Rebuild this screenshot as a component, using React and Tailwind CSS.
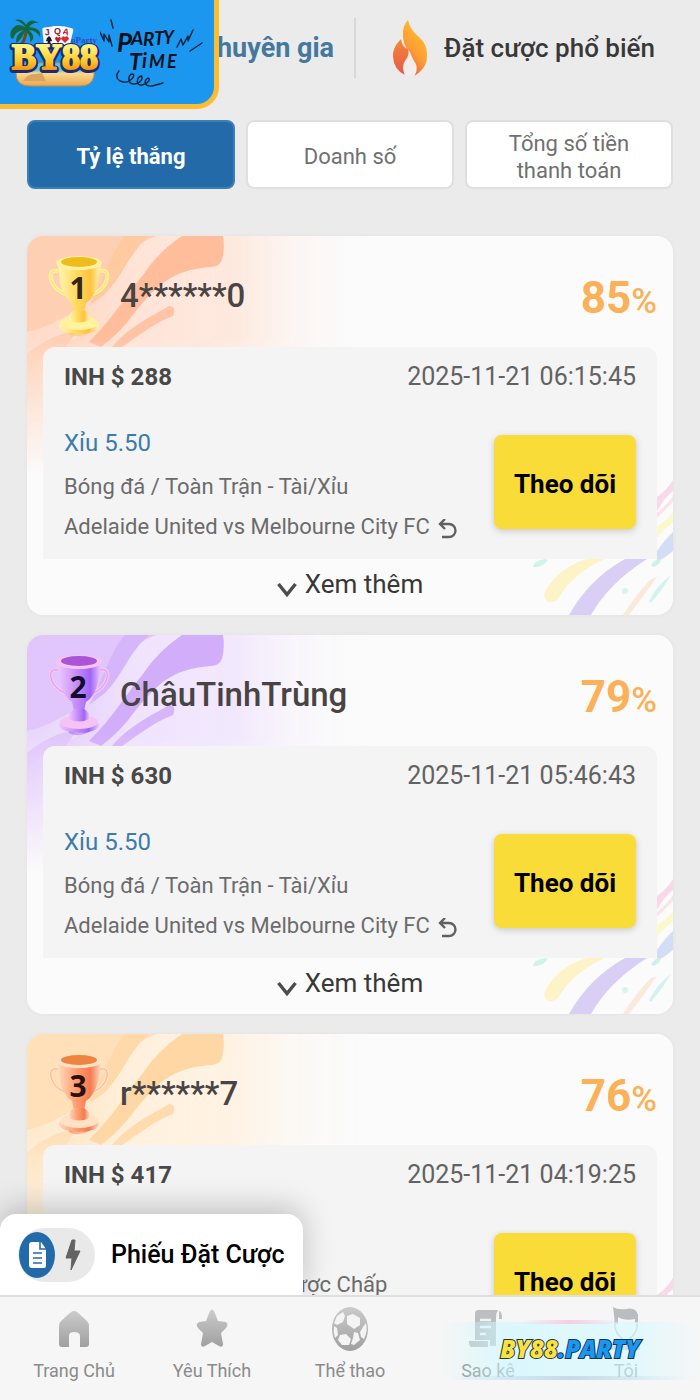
import React from "react";

const bets = [
  { rank: 1, name: "4******0", rate: 85, stake: 288, time: "2025-11-21 06:15:45", type: "Tài/Xỉu" },
  { rank: 2, name: "ChâuTinhTrùng", rate: 79, stake: 630, time: "2025-11-21 05:46:43", type: "Tài/Xỉu" },
  { rank: 3, name: "r******7", rate: 76, stake: 417, time: "2025-11-21 04:19:25", type: "Cược Chấp" },
];

const themes = {
  1: { bg: "#ffcfb4", deep: "#ffbd9c", mid: "#ffcaa0", pale: "#ffe3d6", cup: ["#fff6b0", "#ffd95c", "#ffc23e"], rim: "#fff3a0", inner: "#eebc1c", digit: "#33241c" },
  2: { bg: "#e0c6fb", deep: "#d2adf9", mid: "#d6b6fa", pale: "#efe2fd", cup: ["#efc6ff", "#c48af8", "#a065f4"], rim: "#f5c4f5", inner: "#a955d6", digit: "#120c30" },
  3: { bg: "#ffe0b8", deep: "#ffd7a4", mid: "#ffd9aa", pale: "#fff0dc", cup: ["#ffd9bd", "#ff9a6c", "#f67a50"], rim: "#ffe1c6", inner: "#ef8440", digit: "#2a1010" },
};

function Ribbon({ rank }) {
  const t = themes[rank];
  return (
    <svg className="absolute left-0 top-0 h-[250px] w-[340px]" viewBox="0 0 340 250" aria-hidden="true">
      <defs>
        <linearGradient id={`wash${rank}`} x1="0" x2="1" y1="0" y2="0">
          <stop offset="0" stopColor={t.bg} />
          <stop offset=".3" stopColor={t.pale} />
          <stop offset=".62" stopColor={t.pale} stopOpacity=".75" />
          <stop offset="1" stopColor="#fbfbfb" stopOpacity="0" />
        </linearGradient>
        <linearGradient id={`fade${rank}`} x1="0" x2="0" y1="0" y2="1">
          <stop offset=".4" stopColor="#fff" />
          <stop offset=".95" stopColor="#000" />
        </linearGradient>
        <mask id={`mask${rank}`}>
          <rect width="340" height="250" fill={`url(#fade${rank})`} />
        </mask>
      </defs>
      <g mask={`url(#mask${rank})`}>
        <rect width="340" height="250" fill={`url(#wash${rank})`} />
        <path d="M0 0H130C98 8 88 50 52 72C26 86 20 98 0 104Z" fill={t.bg} />
        <path d="M98 0H122C102 17 96 40 78 58L62 70C76 46 82 18 98 0Z" fill={t.mid} />
        <path d="M155 0H196Q198 12 195 24Q192 31 184 31C143 34 130 50 108 76Q94 96 74 111L62 106C88 80 96 63 116 39Q130 17 155 0Z" fill={t.deep} />
        <path d="M0 96C26 90 28 83 51 76L68 90C47 106 26 112 0 128Z" fill={t.pale} opacity=".6" />
        <path d="M0 118Q24 98 50 95L38 112Q14 116 0 136Z" fill={t.bg} />
        <path d="M84 112C102 91 120 83 142 70Q150 70 146 80C130 86 116 96 94 112Z" fill={t.deep} opacity=".85" />
      </g>
    </svg>
  );
}

function Confetti() {
  return (
    <svg className="absolute bottom-0 right-0 h-[150px] w-[160px]" viewBox="0 0 160 150" aria-hidden="true">
      <path d="M144 32Q154 25 160 15V26Q151 33 144 46Z" fill="#f7d9e8" />
      <path d="M144 48Q154 40 160 31V37Q152 45 144 53Z" fill="#fbe3ea" />
      <path d="M144 61Q154 56 160 47V57Q152 64 144 72Z" fill="#fbf8cc" />
      <path d="M144 86Q152 74 160 67V86Q153 92 144 97Z" fill="#d3ddf6" />
      <path d="M36 137Q28 133 34 123Q50 100 74 94H92Q60 108 45 134Q41 138 36 137Z" fill="#fcf4c6" />
      <path d="M56 150Q76 114 112 94H134Q96 118 78 150Z" fill="#d9cff5" />
      <path d="M110 150Q124 128 138 114L144 112Q130 132 116 150Z" fill="#fbeadb" />
      <path d="M136 136Q144 120 158 110Q150 124 138 138Z" fill="#d4f3f0" />
      <path d="M20 102Q20 96 32 94L35 95Q30 102 23 102Z" fill="#cff5e7" />
      <path d="M138 100Q143 93 148 94Q147 100 140 102Z" fill="#cdf0ea" />
      <circle cx="112" cy="126" r="3" fill="#d9f4ed" />
    </svg>
  );
}

function Trophy({ rank }) {
  const t = themes[rank];
  return (
    <svg className="h-[84px] w-[62px]" viewBox="0 0 62 84" role="img" aria-label={`Hạng ${rank}`}>
      <defs>
        <linearGradient id={`cup${rank}`} x1="0" x2="1" y1="0" y2="0">
          <stop offset="0" stopColor={t.cup[0]} />
          <stop offset=".45" stopColor={t.cup[1]} />
          <stop offset=".75" stopColor={t.cup[2]} />
          <stop offset="1" stopColor={t.cup[0]} />
        </linearGradient>
      </defs>
      <path d="M10 17Q1 15 3 25Q6 36 17 40M52 17Q61 15 59 25Q56 36 45 40" fill="none" stroke={t.rim} strokeWidth="4" />
      <path d="M10 17Q1 15 3 25Q6 36 17 40M52 17Q61 15 59 25Q56 36 45 40" fill="none" stroke={t.cup[1]} strokeWidth="1" opacity=".7" />
      <path d="M10 9L12 29Q15 43 24 49L26 58H36L38 49Q47 43 50 29L53 9Z" fill={`url(#cup${rank})`} />
      <ellipse cx="31" cy="72" rx="20" ry="8" fill={`url(#cup${rank})`} />
      <ellipse cx="31" cy="69" rx="19" ry="7" fill={t.rim} />
      <path d="M21 66Q20 60 26 56H36Q43 60 41 66Q31 71 21 66Z" fill={`url(#cup${rank})`} />
      <path d="M21 79Q31 84 41 78" stroke={t.cup[2]} strokeWidth="2" fill="none" opacity=".5" />
      <ellipse cx="31" cy="9" rx="23" ry="7" fill={t.rim} />
      <ellipse cx="31" cy="8" rx="18" ry="5" fill={t.inner} />
      <text x="30" y="45" textAnchor="middle" fontFamily="'Noto Sans', sans-serif" fontWeight="700" fontSize="30" fill={t.digit}>{rank}</text>
    </svg>
  );
}

function BetCard({ bet }) {
  return (
    <article className="relative flex shrink-0 flex-col overflow-hidden rounded-2xl bg-[#fbfbfb] shadow-[0_0_5px_rgba(0,0,0,0.04)]">
      <Ribbon rank={bet.rank} />
      <Confetti />
      <header className="relative flex h-[111px] items-center gap-2.5 pl-[21px] pr-4 pt-2">
        <Trophy rank={bet.rank} />
        <h2 className="flex-1 text-[33px] font-medium text-[#484444]">{bet.name}</h2>
        <p className="pt-1 text-[44px] font-bold text-[#fbb157]">
          {bet.rate}<span className="text-[35px] font-medium">%</span>
        </p>
      </header>
      <div className="relative mx-4 rounded-t-xl bg-[#f4f4f4] px-[21px] pb-3">
        <div className="flex h-[60px] items-center justify-between">
          <strong className="text-[24px] font-bold text-[#484848]">INH $ {bet.stake}</strong>
          <time className="text-[25px] text-[#626262]">{bet.time}</time>
        </div>
        <div className="flex items-start justify-between pt-4">
          <div className="whitespace-nowrap text-[22px] leading-10 text-[#6b6b6b]">
            <p className="mb-1 text-[24px] text-[#3c7cac]">Xỉu 5.50</p>
            <p>Bóng đá / Toàn Trận - {bet.type}</p>
            <p className="flex items-center gap-2">
              Adelaide United vs Melbourne City FC
              <svg className="mt-1 h-5 w-5" viewBox="0 0 20 20" fill="none" stroke="#606060" strokeWidth="2.4" aria-hidden="true">
                <path d="M2 5H11A6.500 6.500 0 0 1 11 18H4M7 0L2 5L7 10" />
              </svg>
            </p>
          </div>
          <button className="mt-3 h-[94px] w-[142px] shrink-0 rounded-lg bg-[#f9dc37] pt-1 text-[26px] font-bold text-black shadow-[0_2px_7px_rgba(0,0,0,0.18)]">
            Theo dõi
          </button>
        </div>
      </div>
      <button className="relative flex h-14 items-center justify-center gap-2 pb-1.5 text-[26px] text-[#383838]">
        <svg className="mt-3 h-[18px] w-5" viewBox="0 0 20 18" fill="none" stroke="#4c4c4c" strokeWidth="3.4" aria-hidden="true">
          <path d="M1.500 3L10 13.500L18.500 3" />
        </svg>
        Xem thêm
      </button>
    </article>
  );
}

function BrandLogo() {
  return (
    <svg className="h-[72px] w-[92px] shrink-0" viewBox="0 0 92 72" role="img" aria-label="BY88">
      <defs>
        <linearGradient id="gold" x1="0" x2="0" y1="0" y2="1">
          <stop offset=".25" stopColor="#fff27a" />
          <stop offset=".6" stopColor="#ffc928" />
          <stop offset=".85" stopColor="#f58d10" />
        </linearGradient>
        <linearGradient id="sand" x1="0" x2="0" y1="0" y2="1">
          <stop offset="0" stopColor="#59c8e5" />
          <stop offset=".3" stopColor="#59c8c9" />
          <stop offset=".45" stopColor="#f9d98f" />
          <stop offset="1" stopColor="#e9a752" />
        </linearGradient>
      </defs>
      <path d="M8 46H86V59Q84 69 72 69H22Q8 69 8 56Z" fill="url(#sand)" stroke="#c98b42" strokeWidth="1" />
      <path d="M15 64Q20 56 28 57L34 56L38 64Z" fill="#dba35e" />
      <path d="M14 27Q19 18 18 10" fill="none" stroke="#6b4a20" strokeWidth="3" />
      <path d="M18 11Q9 4 3 14Q1 21 5 22Q7 14 16 13Q7 18 8 26Q14 22 17 14Q23 18 22 25Q29 21 21 13Q28 13 32 20Q34 11 21 10Q25 5 31 6Q22 0 18 8Q14 1 7 3Q14 5 18 11Z" fill="#14663c" />
      <g fontFamily="'Liberation Sans', sans-serif" fontWeight="700" fontSize="9">
        <g transform="rotate(-6 41 19)"><rect x="35" y="10" width="13" height="18" rx="2" fill="#f2f5ff" /><text x="37" y="18" fill="#8f1624">J</text></g>
        <g transform="rotate(14 58 18)"><rect x="52" y="10" width="12" height="18" rx="2" fill="#f9faff" /><text x="54" y="18" fill="#c21c28">A</text></g>
        <rect x="44" y="9" width="11" height="19" rx="2" fill="#fff" /><text x="46" y="17" fill="#8f1624">Q</text>
      </g>
      <path d="M38 24Q38 21 41 19Q44 21 44 24L42 24.500L43 27H39L40 24.500Z" fill="#161a20" />
      <path d="M50 26L47 22Q48 18 50 21Q52 18 53 22Z" fill="#c21c28" />
      <path d="M57 26L53 22Q54 18 57 20Q60 18 61 22Z" fill="#d33036" />
      <text x="63" y="26" fontFamily="'Liberation Serif', serif" fontWeight="700" fontSize="9" fill="#344ac6">oParty</text>
      <text x="4" y="53" fontFamily="'Liberation Serif', serif" fontWeight="700" fontSize="36" fill="none" stroke="#1a2a78" strokeWidth="6" strokeLinejoin="round">BY88</text>
      <text x="4" y="52" fontFamily="'Liberation Serif', serif" fontWeight="700" fontSize="36" fill="url(#gold)" stroke="url(#gold)" strokeWidth="2" strokeLinejoin="round">BY88</text>
    </svg>
  );
}

function PartyTime() {
  return (
    <svg className="h-[72px] w-[104px] shrink-0" viewBox="0 0 104 72" role="img" aria-label="Party Time">
      <g fontFamily="Lato, sans-serif" fontWeight="700" fontStyle="italic" fill="#08111c">
        <text x="17" y="35" fontSize="26">P</text>
        <text x="31" y="28" fontSize="19">A</text>
        <text x="43" y="29" fontSize="19">R</text>
        <text x="54" y="28" fontSize="18">T</text>
        <text x="63" y="27" fontSize="18">Y</text>
        <text x="29" y="53" fontSize="23">T</text>
        <text x="42" y="51" fontSize="20">i</text>
        <text x="49" y="51" fontSize="18">M</text>
        <text x="67" y="51" fontSize="18">E</text>
      </g>
      <g fill="none" stroke="#08203a" strokeWidth="1.400" strokeLinecap="round" strokeLinejoin="round">
        <path d="M0 15L4 24V17L9 25V18L12 29M11 3L13 11" />
        <path d="M77 30L81 22L83 28L88 19V24L93 13M90 34Q96 30 102 26" />
        <path d="M19 54Q14 60 20 64C29 68 36 59 33 57C28 57 27 66 33 67C41 67 44 60 41 59C36 61 36 69 42 68C48 67 51 62 48 61C43 64 45 70 52 69L63 66" />
      </g>
    </svg>
  );
}

function Flame() {
  return (
    <svg className="h-[58px] w-9 shrink-0" viewBox="0 0 36 58" aria-hidden="true">
      <defs>
        <linearGradient id="outer" x1=".7" x2=".2" y1="0" y2="1">
          <stop offset="0" stopColor="#ffc52e" /><stop offset=".55" stopColor="#fc9c35" /><stop offset="1" stopColor="#e9563f" />
        </linearGradient>
        <linearGradient id="side" x1="0" x2="0" y1="0" y2="1">
          <stop offset="0" stopColor="#f08a36" /><stop offset="1" stopColor="#e9574a" />
        </linearGradient>
      </defs>
      <path d="M16 1Q10 7 11 18Q12 28 18 33Q21 41 24 45Q26 52 22 57Q36 49 35 35Q35 25 27 18Q18 11 16 1Z" fill="url(#outer)" />
      <path d="M9 20Q0 29 1 38Q2 51 13 56Q9 48 13 42Q18 36 16 30Q10 28 9 20Z" fill="url(#side)" />
      <path d="M18 36Q17 41 13 46Q11 51 13 57H22Q25 53 24 46L21 47Q19 42 18 36Z" fill="#f3eceb" />
    </svg>
  );
}

function NavIcon({ name }) {
  const fill = "url(#navGray)";
  return (
    <svg className="h-11 w-10" viewBox="0 0 40 44" aria-hidden="true">
      <defs>
        <linearGradient id="navGray" x1="0" x2="0" y1="0" y2="1">
          <stop offset="0" stopColor="#cbcbcb" /><stop offset="1" stopColor="#a0a0a0" />
        </linearGradient>
      </defs>
      {name === "home" && <path d="M17 5Q20 3 23 5L33 14Q35 16 35 20V37Q35 40 32 40H26V29Q26 25 20 25Q15 25 15 29V40H8Q5 40 5 37V20Q5 16 7 14Z" fill={fill} />}
      {name === "star" && <path d="M18 4Q20 1 22 4L26 14L34 15Q37 17 34 21L29 26L31 37Q31 41 27 39L20 35L13 39Q9 41 9 37L11 26L6 21Q3 17 7 15L14 14Z" fill={fill} />}
      {name === "ball" && <g>
        <ellipse cx="20" cy="22" rx="18" ry="22" fill={fill} />
        <path d="M7 9L13 5L15 9L13 15L7 18L4 16ZM17 9L23 7L30 11L30 18L24 22L17 17ZM4 19L7 21L8 28L5 31Q3 25 4 19ZM33 20L36 16Q38 24 34 32L31 30L30 25ZM10 28L16 27L21 32L19 38L12 38L8 33ZM24 25L28 26L30 33L24 38L21 37L23 31Z" fill="#f4f4f4" />
      </g>}
      {name === "receipt" && <g fill="#bcbfc0">
        <path d="M10 3H30Q28 6 28 11V39H22V33H7V7Q7 3 10 3ZM31 4Q34 4 34 12H31ZM1 34H20V40H4Q1 40 1 34Z" />
        <path d="M12 13H23M12 20H23M12 27H18" stroke="#edf5f6" strokeWidth="2.500" />
      </g>}
      {name === "user" && <g fill="#b9bdbe">
        <path d="M7 0Q12 3 20 2Q30 0 32 8V16H29V12Q18 14 12 10V17H9Q8 8 7 0Z" />
        <path d="M9 14V21Q11 28 16 31V35L20 38L24 35V31Q29 28 31 21V14" fill="none" stroke="#b9bdbe" strokeWidth="1.500" />
        <path d="M11 31L20 39L29 31Q34 34 34 43H5Q5 34 11 31Z" />
      </g>}
    </svg>
  );
}

const navItems = [
  ["home", "Trang Chủ"],
  ["star", "Yêu Thích"],
  ["ball", "Thể thao"],
  ["receipt", "Sao kê"],
  ["user", "Tôi"],
];

export default function App() {
  return (
    <div className="relative flex h-screen flex-col overflow-hidden bg-[#ebebeb] font-[Roboto,'Noto_Sans',sans-serif]">
      <div className="absolute left-0 top-0 z-10 flex h-[109px] w-[219px] items-start overflow-hidden rounded-br-[22px] border-b-[5px] border-r-[5px] border-[#fdbd2e] bg-[#1b97f0] pl-2 pt-[17px]">
        <BrandLogo />
        <PartyTime />
      </div>
      <header className="flex h-24 shrink-0 items-center">
        <a href="#experts" className="flex-1 whitespace-nowrap pr-5 text-right text-[27px] font-bold text-[#44789f]">Chuyên gia</a>
        <div className="h-[60px] w-0.5 bg-[#d8d8d8]" />
        <a href="#popular" className="flex shrink-0 items-center gap-4 whitespace-nowrap pl-9 pr-[45px] text-[26px] font-medium text-[#383838]">
          <Flame />
          Đặt cược phổ biến
        </a>
      </header>
      <main className="flex min-h-0 flex-1 flex-col overflow-hidden px-[27px] pt-6">
        <div className="mb-[47px] grid h-[69px] shrink-0 grid-cols-3 gap-[11px] text-[22px] leading-[27px] text-[#707070]">
          <button className="rounded-lg border-2 border-[#3d80b8] bg-[#236ba8] pt-1 font-bold text-white">Tỷ lệ thắng</button>
          <button className="rounded-lg border-2 border-[#dfdfdf] bg-white pt-1">Doanh số</button>
          <button className="rounded-lg border-2 border-[#dfdfdf] bg-white pt-1">Tổng số tiền<br />thanh toán</button>
        </div>
        <div className="flex flex-col gap-5">
          {bets.map((bet) => <BetCard key={bet.rank} bet={bet} />)}
        </div>
      </main>
      <footer className="relative shrink-0">
        <button className="absolute bottom-full left-0 flex h-[81px] w-[303px] items-center gap-4 whitespace-nowrap rounded-t-2xl bg-white pl-[18px] text-[25px] font-medium text-black shadow-[0_-6px_30px_rgba(0,0,0,0.22)]">
          <span className="flex h-[54px] w-[77px] items-center rounded-full bg-[#e9e9e9]">
            <svg className="h-[54px] w-[77px]" viewBox="0 0 77 54" aria-hidden="true">
              <ellipse cx="19" cy="27" rx="18" ry="23" fill="#236ba8" />
              <path d="M14 14H23L28 21V38Q28 40 26 40H14Q11 40 11 37V17Q11 14 14 14Z" fill="#fff" />
              <path d="M22 14V21H28M15 25H24M15 30H24M15 35H24" fill="none" stroke="#236ba8" strokeWidth="1.600" />
              <path d="M54 12L48 30H54L53 42L62 23H56L57 12Z" fill="#626262" stroke="#626262" strokeWidth="1" />
            </svg>
          </span>
          Phiếu Đặt Cược
        </button>
        <nav className="relative grid h-[105px] grid-cols-5 border-t-2 border-[#dfdfdf] bg-[#f6f6f6] px-[5px] pt-2.5 text-[18px] text-[#8b8b8b]">
          {navItems.map(([icon, label]) => (
            <a key={icon} href={`#${icon}`} className="flex flex-col items-center gap-2">
              <NavIcon name={icon} />
              <span className="leading-6">{label}</span>
            </a>
          ))}
        </nav>
        <div className="pointer-events-none absolute bottom-5 right-0 flex h-[58px] w-[260px] items-center justify-center bg-[linear-gradient(90deg,transparent,rgba(205,248,255,0.65)_25%,rgba(215,250,255,0.65)_75%,transparent)] pb-1">
          <div className="absolute inset-x-20 -top-0.5 h-1 rounded-full bg-linear-to-r from-transparent via-[#f6cde5] to-transparent" />
          <div className="absolute inset-x-3 bottom-0 h-1 rounded-full bg-linear-to-r from-transparent via-[#a9c0c8]/50 to-transparent" />
          <p className="font-['Open_Sans',sans-serif] text-[24px] font-extrabold italic text-[#ffe13c] [-webkit-text-stroke:2px_#173458] [paint-order:stroke]">
            BY88<span className="text-[#1998f2]">.PARTY</span>
          </p>
        </div>
      </footer>
    </div>
  );
}
